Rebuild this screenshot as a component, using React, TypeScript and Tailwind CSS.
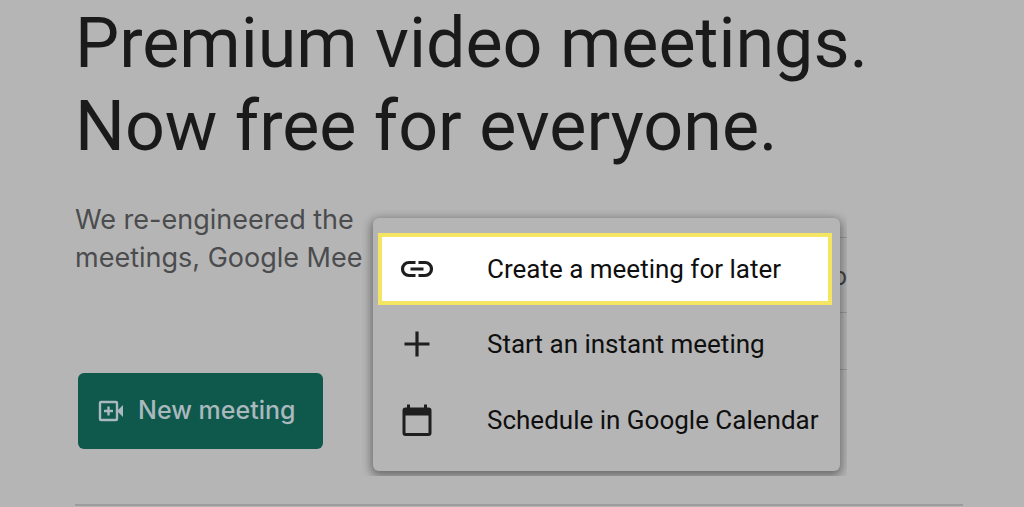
import React from "react";

interface IMenuItem {
  label: string;
  icon: React.ReactNode;
  highlighted?: boolean;
}

function LinkIcon() {
  return (
    <svg viewBox="0 0 38 38" className="size-[38px]" fill="none" stroke="currentColor" strokeWidth="3.2" aria-hidden="true">
      <path d="M17.5 12.5H11a6.5 6.5 0 0 0 0 13h6.5M20.5 12.5H27a6.5 6.5 0 0 1 0 13h-6.5M12.5 19h13" />
    </svg>
  );
}

function PlusIcon() {
  return (
    <svg viewBox="0 0 38 38" className="size-[38px]" fill="none" stroke="currentColor" strokeWidth="3.2" aria-hidden="true">
      <path d="M19 6.500v25M6.500 19h25" />
    </svg>
  );
}

function CalendarIcon() {
  return (
    <svg viewBox="0 0 38 38" className="size-[38px]" fill="currentColor" fillRule="evenodd" aria-hidden="true">
      <path d="M9 3.500h3V6.500h14V3.500h3V6.500h1.500a3 3 0 0 1 3 3V32a3 3 0 0 1-3 3h-23a3 3 0 0 1-3-3V9.500a3 3 0 0 1 3-3H9zM7.500 14.500V32h23V14.500z" />
    </svg>
  );
}

function VideoIcon() {
  return (
    <svg viewBox="0 0 26 22" className="h-[22px] w-[26px]" fill="none" stroke="currentColor" strokeWidth="2.4" aria-hidden="true">
      <rect x="2" y="2" width="17" height="18" rx="1" />
      <path d="M10.500 6.500v9M6 11h9" />
      <path d="M19 11l6-6v12z" fill="currentColor" stroke="none" />
    </svg>
  );
}

const items: IMenuItem[] = [
  { label: "Create a meeting for later", icon: <LinkIcon />, highlighted: true },
  { label: "Start an instant meeting", icon: <PlusIcon /> },
  { label: "Schedule in Google Calendar", icon: <CalendarIcon /> },
];

function MeetingMenu() {
  return (
    <div className="absolute left-[362px] top-[205px] w-[485px] overflow-hidden bg-[#b5b5b5] pt-[13px] pr-[7px] pb-[5px] pl-[11px]">
      <input
        type="text"
        aria-label="Meeting code"
        defaultValue="o"
        className="absolute right-0 top-8 h-[76px] w-24 border-y border-[#999] pt-0.5 text-right font-['Roboto',sans-serif] text-[25px] text-[#444]"
      />
      <div className="absolute right-0 top-[164px] w-24 border-t border-[#999]" />
      <div
        role="menu"
        className="relative rounded-md bg-[#b5b5b5] pt-[15px] pb-[13px] shadow-[0_3px_10px_2px_rgba(0,0,0,0.4)]"
      >
        {items.map((item) => (
          <button
            key={item.label}
            type="button"
            role="menuitem"
            className={
              item.highlighted
                ? "mx-[5px] mb-px flex h-[72px] w-[calc(100%-13px)] items-center gap-[51px] border-4 border-[#f4e563] bg-white pl-4 text-left"
                : "flex h-[76px] w-full items-center gap-[51px] pl-[25px] text-left"
            }
          >
            <span className="text-[#1e1e1e]">{item.icon}</span>
            <span className="text-[26px] whitespace-nowrap text-[#0f0f0f]">{item.label}</span>
          </button>
        ))}
      </div>
    </div>
  );
}

function App() {
  return (
    <main className="relative min-h-screen overflow-hidden bg-[#b5b5b5] pt-0.5 pr-[61px] pl-[75px] font-['Roboto',sans-serif]">
      <h1 className="text-[70px] leading-[83px] whitespace-nowrap text-[#1a1a1a]">
        Premium video meetings.
        <br />
        Now free for everyone.
      </h1>
      <p className="mt-[33px] font-['Inter',sans-serif] text-[27px] leading-[38px] text-[#4b4c4e]">
        We re-engineered the
        <br />
        meetings, Google Meet
      </p>
      <button
        type="button"
        className="mt-24 ml-[3px] flex h-[76px] w-[245px] items-center gap-3.5 rounded-md bg-[#0f584c] pl-5 font-['Inter',sans-serif] text-[25px] font-medium text-[#a9b9bd]"
      >
        <VideoIcon />
        New meeting
      </button>
      <hr className="mt-[55px] border-t-2 border-[#9c9c9c]" />
      <MeetingMenu />
    </main>
  );
}

export default App;
